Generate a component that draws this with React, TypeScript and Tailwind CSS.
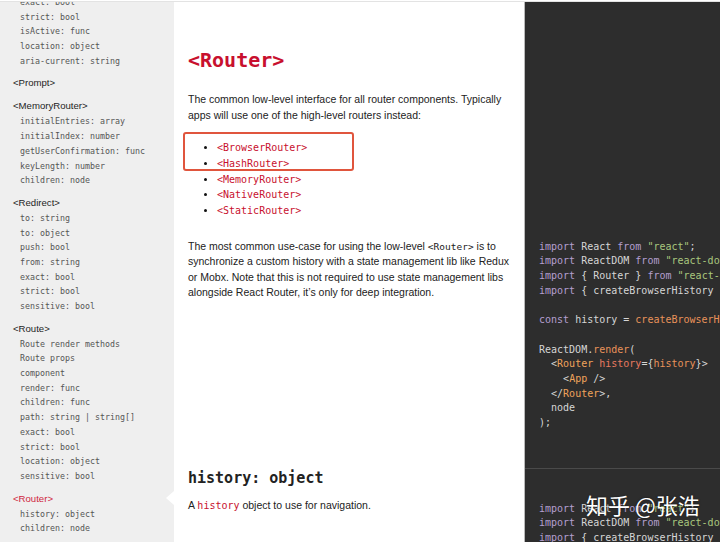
import React from "react";

const mono = { fontFamily: '"DejaVu Sans Mono", "Liberation Mono", monospace' };
const sans = { fontFamily: '"Liberation Sans", Arial, sans-serif' };

type Section = { title?: string; active?: boolean; items: string[] };

const sections: Section[] = [
  { items: ["exact: bool", "strict: bool", "isActive: func", "location: object", "aria-current: string"] },
  { title: "<Prompt>", items: [] },
  {
    title: "<MemoryRouter>",
    items: ["initialEntries: array", "initialIndex: number", "getUserConfirmation: func", "keyLength: number", "children: node"],
  },
  {
    title: "<Redirect>",
    items: ["to: string", "to: object", "push: bool", "from: string", "exact: bool", "strict: bool", "sensitive: bool"],
  },
  {
    title: "<Route>",
    items: [
      "Route render methods",
      "Route props",
      "component",
      "render: func",
      "children: func",
      "path: string | string[]",
      "exact: bool",
      "strict: bool",
      "location: object",
      "sensitive: bool",
    ],
  },
  { title: "<Router>", active: true, items: ["history: object", "children: node"] },
];

const K = ({ children }: { children: React.ReactNode }) => <span className="text-[#b49fd0]">{children}</span>;
const S = ({ children }: { children: React.ReactNode }) => <span className="text-[#a9c77d]">{children}</span>;
const F = ({ children }: { children: React.ReactNode }) => <span className="text-[#e8925a]">{children}</span>;
const T = ({ children }: { children: React.ReactNode }) => <span className="text-[#f0a35b]">{children}</span>;
const A = ({ children }: { children: React.ReactNode }) => <span className="text-[#e7795f]">{children}</span>;

function Line({ children }: { children?: React.ReactNode }) {
  return <div className="h-[14.7px] leading-[14.7px] whitespace-pre">{children ?? " "}</div>;
}

export default function App() {
  return (
    <div className="w-[720px] h-[542px] overflow-hidden bg-white flex flex-col relative">
      <div className="h-[1px] bg-white" />
      <div className="h-[1px] bg-[#e3e3e3]" />
      <div className="flex flex-1 min-h-0">
        {/* Sidebar */}
        <div className="w-[174px] bg-[#efefef] overflow-hidden relative">
          <div className="-mt-[7px]">
            {sections.map((s, i) => (
              <div key={i}>
                {s.title && (
                  <div
                    className={`relative mt-[6px] h-[17px] leading-[17px] pl-[13px] text-[9.6px] ${
                      s.active ? "text-[#d0263e]" : "text-[#1e1e1e]"
                    }`}
                    style={sans}
                  >
                    {s.title}
                    {s.active && (
                      <div className="absolute right-0 top-[1px] w-0 h-0 border-y-[7px] border-y-transparent border-r-[8px] border-r-white" />
                    )}
                  </div>
                )}
                {s.items.map((it, j) => (
                  <div
                    key={j}
                    className="h-[14.7px] leading-[14.7px] pl-[20px] text-[8.3px] text-[#555] whitespace-pre"
                    style={mono}
                  >
                    {it}
                  </div>
                ))}
              </div>
            ))}
          </div>
        </div>

        {/* Main */}
        <div className="w-[350px] bg-white pl-[14px] pr-[10px] pt-[46px] text-[#222]" style={sans}>
          <h1 className="text-[20px] leading-[24px] font-bold text-[#c8102e]" style={mono}>
            &lt;Router&gt;
          </h1>
          <p className="mt-[19px] text-[10.5px] leading-[16px] text-[#222]">
            The common low-level interface for all router components. Typically apps will use one of the high-level
            routers instead:
          </p>
          <div className="relative mt-[17px]">
            <div className="absolute -left-[5px] -top-[8px] w-[171px] h-[39px] border-2 border-[#e0553d] rounded-[3px]" />
            <ul className="list-disc pl-[29px] text-[10px] text-[#c8102e]" style={mono}>
              {["<BrowserRouter>", "<HashRouter>", "<MemoryRouter>", "<NativeRouter>", "<StaticRouter>"].map((r) => (
                <li key={r} className="h-[15.75px] leading-[15.75px] marker:text-[#111]">
                  {r}
                </li>
              ))}
            </ul>
          </div>
          <p className="mt-[20px] text-[10.5px] leading-[15.4px] text-[#222]">
            The most common use-case for using the low-level{" "}
            <span className="text-[9.5px]" style={mono}>
              &lt;Router&gt;
            </span>{" "}
            is to synchronize a custom history with a state management lib like Redux or Mobx. Note that this is not
            required to use state management libs alongside React Router, it’s only for deep integration.
          </p>
          <h2 className="mt-[168px] text-[15px] leading-[20px] font-bold text-[#222]" style={mono}>
            history: object
          </h2>
          <p className="mt-[9px] text-[10.5px] leading-[16px] text-[#222]">
            A{" "}
            <span className="text-[10px] text-[#c8102e]" style={mono}>
              history
            </span>{" "}
            object to use for navigation.
          </p>
        </div>

        {/* Divider */}
        <div className="w-[1px] bg-[#b9b9b9]" />

        {/* Code panel */}
        <div className="flex-1 bg-[#2d2d2d] overflow-hidden text-[10px] text-[#d6d6d6]" style={mono}>
          <div className="pl-[14px] pt-[237.8px] h-[466px]">
            <Line>
              <K>import</K> React <K>from</K> <S>"react"</S>;
            </Line>
            <Line>
              <K>import</K> ReactDOM <K>from</K> <S>"react-dom"</S>;
            </Line>
            <Line>
              <K>import</K> {"{"} Router {"}"} <K>from</K> <S>"react-router"</S>;
            </Line>
            <Line>
              <K>import</K> {"{"} createBrowserHistory {"}"} <K>from</K> <S>"history"</S>;
            </Line>
            <Line />
            <Line>
              <K>const</K> history = <F>createBrowserHistory</F>();
            </Line>
            <Line />
            <Line>
              ReactDOM.<F>render</F>(
            </Line>
            <Line>
              {"  "}&lt;<T>Router</T> <A>history</A>={"{"}
              <F>history</F>
              {"}"}&gt;
            </Line>
            <Line>
              {"    "}&lt;<T>App</T> /&gt;
            </Line>
            <Line>
              {"  "}&lt;/<T>Router</T>&gt;,
            </Line>
            <Line>{"  "}node</Line>
            <Line>);</Line>
          </div>
          <div className="h-[1px] bg-[#4a4a4a]" />
          <div className="pl-[14px] pt-[32.6px]">
            <Line>
              <K>import</K> React <K>from</K> <S>"react"</S>;
            </Line>
            <Line>
              <K>import</K> ReactDOM <K>from</K> <S>"react-dom"</S>;
            </Line>
            <Line>
              <K>import</K> {"{"} createBrowserHistory {"}"} <K>from</K> <S>"history"</S>;
            </Line>
          </div>
        </div>
      </div>

      {/* Watermark */}
      <div
        className="absolute left-[586px] top-[490px] text-[22px] leading-[28px] text-white whitespace-pre [text-shadow:0_0_2px_rgba(0,0,0,0.6)]"
        style={{ fontFamily: '"Noto Sans CJK SC", "Noto Sans", sans-serif' }}
      >
        知乎 @张浩
      </div>
    </div>
  );
}
